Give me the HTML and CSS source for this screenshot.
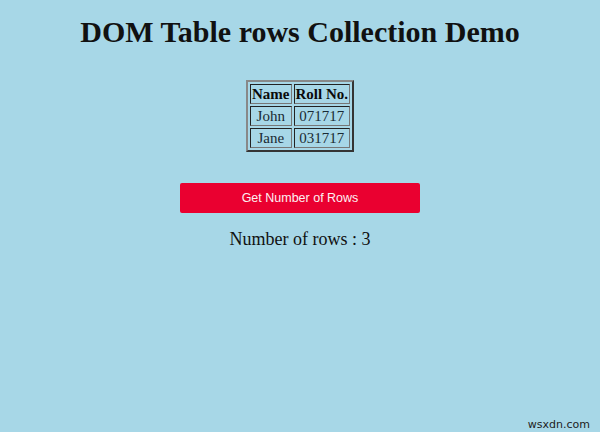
FILE: index.html
```html
<!DOCTYPE html>
<html>
<head>
<meta charset="utf-8">
<link rel="stylesheet" href="styles.css">
</head>
<body>
<h1 class="title">DOM Table rows Collection Demo</h1>
<table class="data">
<tr><th>Name</th><th>Roll No.</th></tr>
<tr><td>John</td><td>071717</td></tr>
<tr><td>Jane</td><td>031717</td></tr>
</table>
<button class="btn">Get Number of Rows</button>
<p class="result">Number of rows : 3</p>
<div class="mark">wsxdn.com</div>
</body>
</html>
```
FILE: styles.css
```css
html, body { margin: 0; padding: 0; }
body {
  background: #a7d7e7;
  font-family: "Liberation Serif", "Times New Roman", serif;
  color: #111;
  width: 600px;
  height: 432px;
  position: relative;
  display: flex;
  flex-direction: column;
  align-items: center;
  overflow: hidden;
}
.title {
  font-size: 30px;
  font-weight: bold;
  margin: 15px 0 0 0;
  line-height: 34px;
}
.data {
  margin-top: 31px;
  border: 2px outset #888;
  border-spacing: 2px;
  font-size: 15px;
  color: #1a2a33;
}
.data th, .data td {
  border: 1px inset #777;
  padding: 1px 1px;
  text-align: center;
  line-height: 16px;
}
.data th { color: #0a0a0a; }
.btn {
  margin-top: 31px;
  width: 240px;
  height: 30px;
  background: #ea0030;
  color: #fdf0f2;
  border: none;
  border-radius: 2px;
  font-family: "Liberation Sans", Arial, sans-serif;
  font-size: 12.5px;
}
.result {
  margin: 15px 0 0 0;
  font-size: 18px;
  line-height: 22px;
}
.mark {
  position: absolute;
  right: 10px;
  bottom: 1px;
  font-family: "DejaVu Sans", sans-serif;
  font-size: 11px;
  color: #222;
}
```
